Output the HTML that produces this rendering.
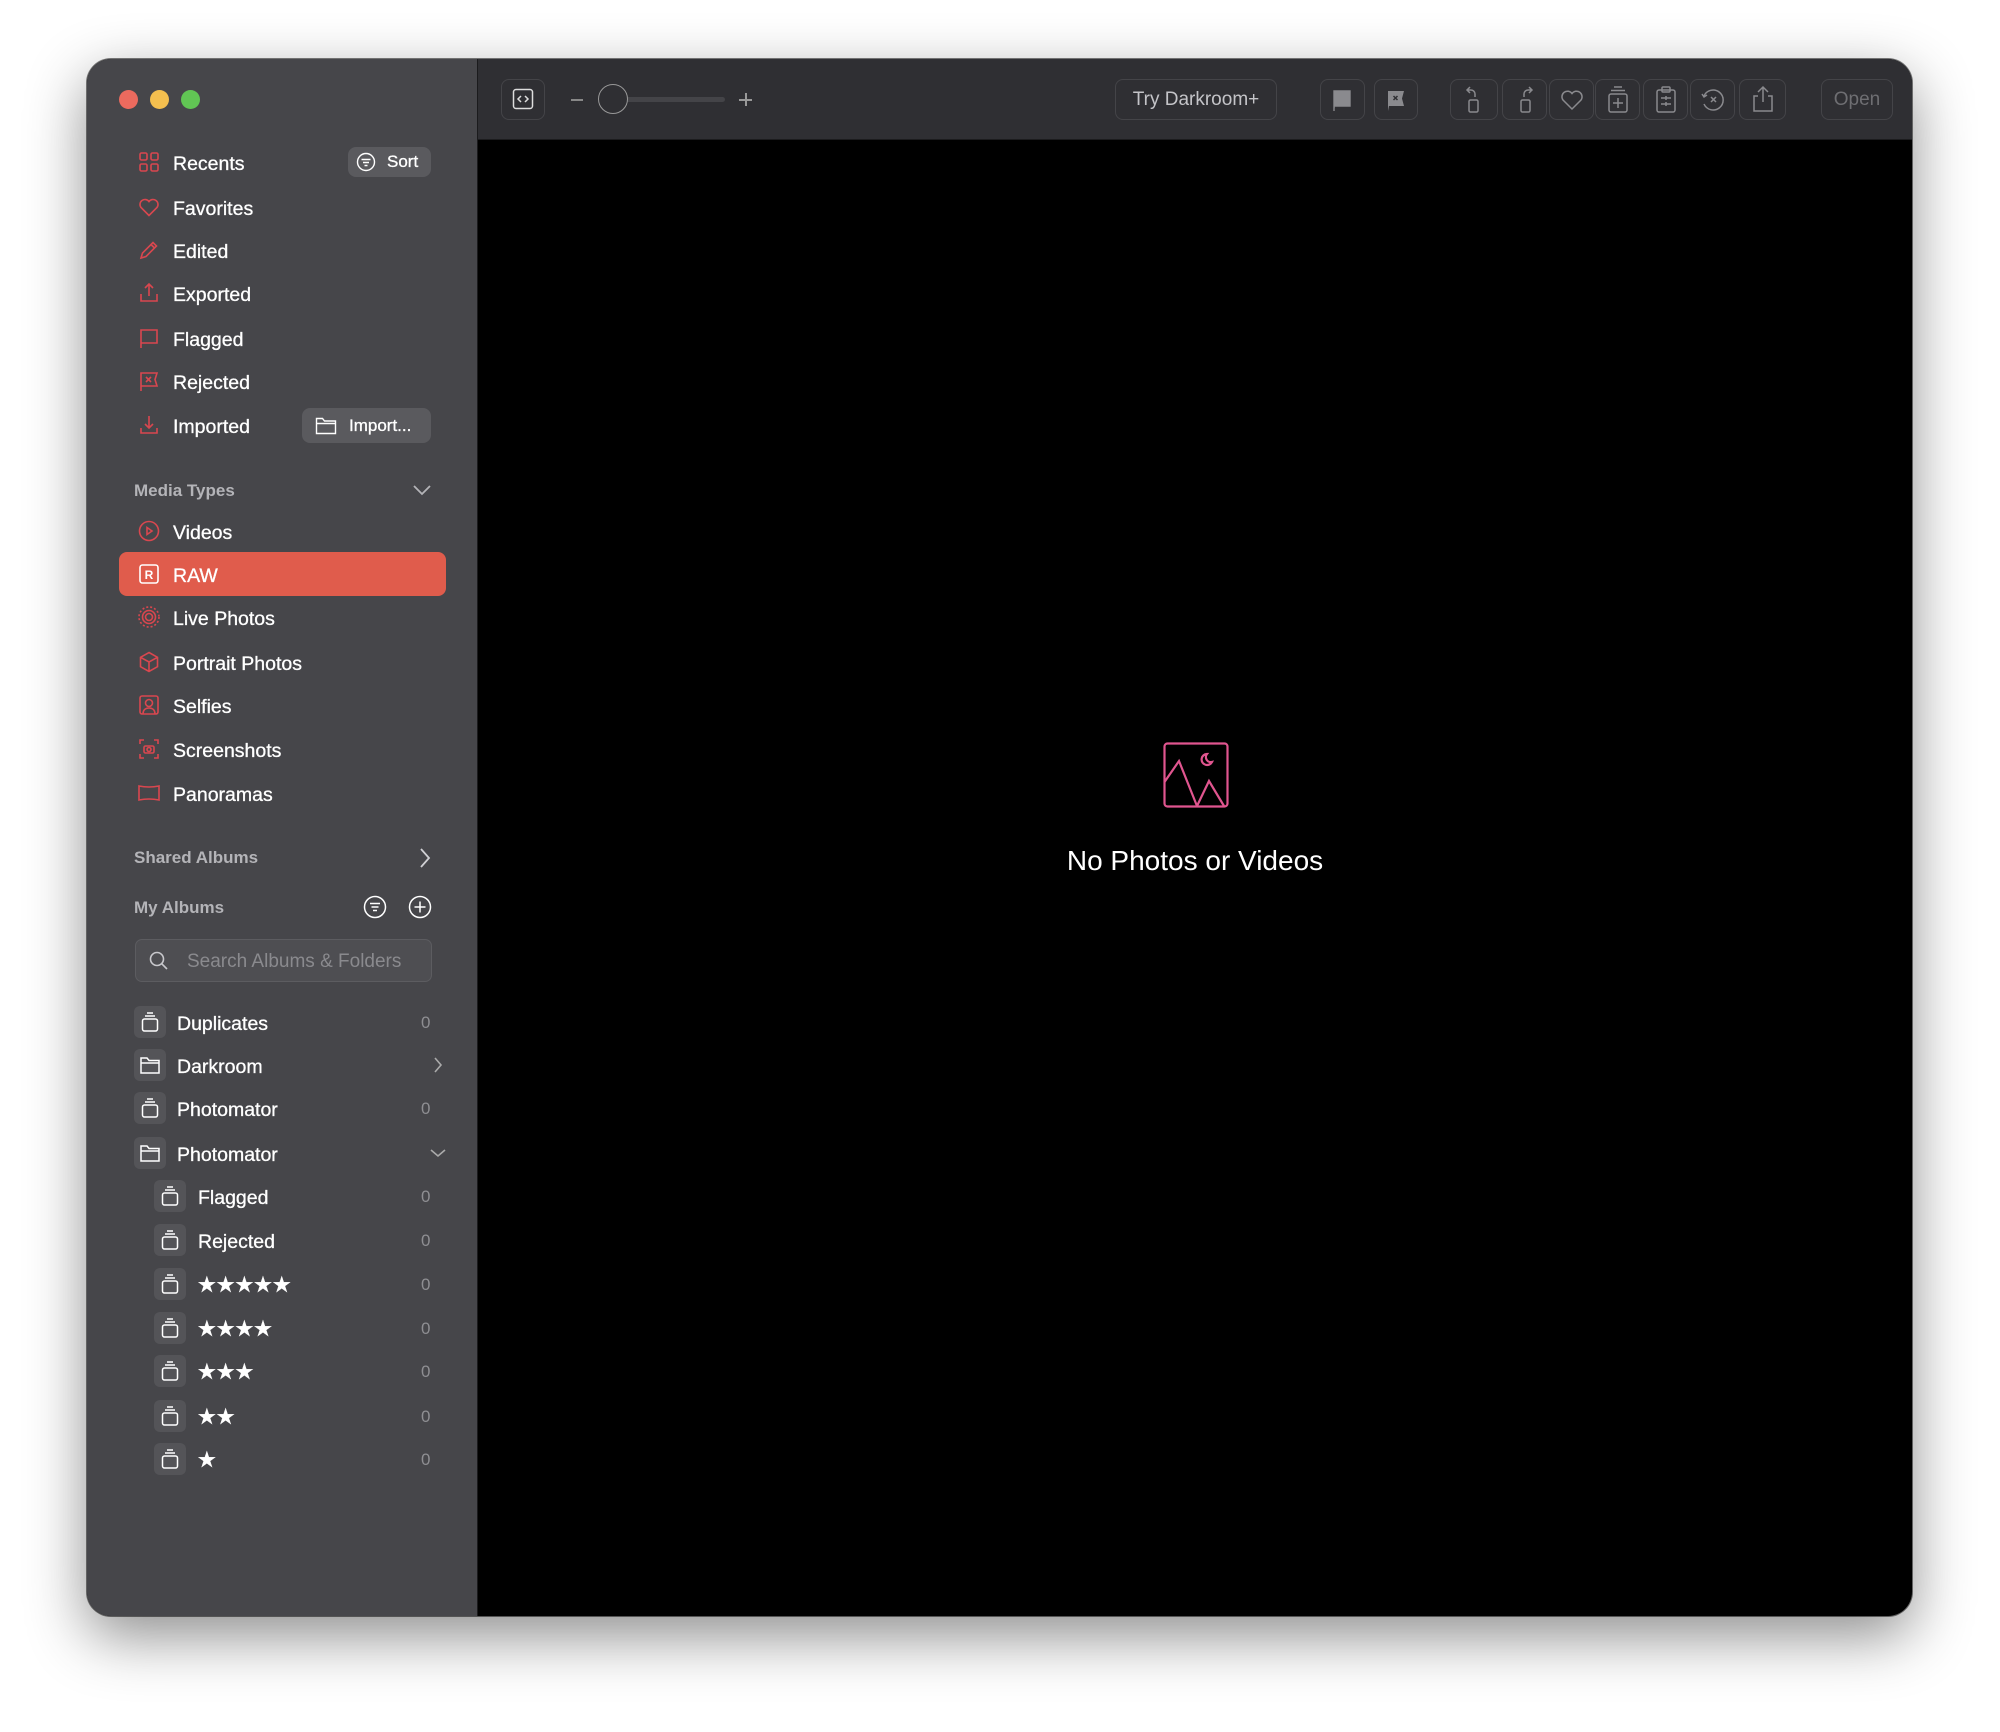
<!DOCTYPE html>
<html><head><meta charset="utf-8"><style>
*{margin:0;padding:0;box-sizing:border-box}
body{width:2000px;height:1732px;background:#fff;position:relative;overflow:hidden;font-family:"Liberation Sans",sans-serif}
.win{position:absolute;left:87px;top:59px;width:1825px;height:1557px;border-radius:24px;overflow:hidden;background:#000;box-shadow:0 20px 60px rgba(0,0,0,.45),0 0 0 1px rgba(0,0,0,.5)}
.side{position:absolute;left:0;top:0;width:391px;height:100%;background:#46464a;border-right:1px solid #1b1b1d}
.tb{position:absolute;left:391px;top:0;right:0;height:81px;background:#2f2f33;border-bottom:1px solid #1c1c1e}
.a{position:absolute}
.t{position:absolute;color:#fff;font-size:19.5px;line-height:24px;white-space:nowrap;margin-top:2px;-webkit-text-stroke:0.3px #fff}
.h{position:absolute;color:#b4b4b8;font-size:17px;font-weight:bold;line-height:22px;margin-top:1px}
.ic{position:absolute;width:24px;height:24px}
.btn{position:absolute;background:#5a5a5e;border-radius:8px;color:#fff;font-size:17px;-webkit-text-stroke:0.3px #fff}
.box{position:absolute;width:32px;height:32px;background:#545458;border-radius:6px}
.n{position:absolute;color:#8e8e92;font-size:17px;line-height:22px;margin-top:1px}
.tbb{position:absolute;top:20px;height:41px;border:1px solid #444448;border-radius:8px}
</style></head><body>
<div class="win">
<div class="side">
 <div class="a" style="left:32px;top:31px;width:19px;height:19px;border-radius:50%;background:#ec6a5e"></div>
 <div class="a" style="left:63px;top:31px;width:19px;height:19px;border-radius:50%;background:#f4bf4f"></div>
 <div class="a" style="left:94px;top:31px;width:19px;height:19px;border-radius:50%;background:#61c554"></div>

 <svg class="ic" style="left:50px;top:91px" viewBox="0 0 24 24" fill="none" stroke="#d9474f" stroke-width="1.6"><rect x="3" y="3" width="7" height="7" rx="1.5"/><rect x="14" y="3" width="7" height="7" rx="1.5"/><rect x="3" y="14" width="7" height="7" rx="1.5"/><rect x="14" y="14" width="7" height="7" rx="1.5"/></svg>
 <div class="t" style="left:86px;top:91px">Recents</div>
 <div class="btn" style="left:261px;top:88px;width:83px;height:30px"><svg class="a" style="left:8px;top:5px" width="20" height="20" viewBox="0 0 20 20" fill="none" stroke="#fff" stroke-width="1.4"><circle cx="10" cy="10" r="8.5"/><path d="M5.5 7.5h9M7 10.5h6M8.5 13.5h3"/></svg><span class="a" style="left:39px;top:5px">Sort</span></div>

 <svg class="ic" style="left:50px;top:136px" viewBox="0 0 24 24" fill="none" stroke="#d9474f" stroke-width="1.6"><path d="M12 20.5 4 12.5A4.8 4.8 0 0 1 12 6.5a4.8 4.8 0 0 1 8 6z"/></svg>
 <div class="t" style="left:86px;top:136px">Favorites</div>
 <svg class="ic" style="left:50px;top:179px" viewBox="0 0 24 24" fill="none" stroke="#d9474f" stroke-width="1.6"><path d="M4 20l1.5-5L16 4.5l3.5 3.5L9 18.5z M14 6.5l3.5 3.5"/></svg>
 <div class="t" style="left:86px;top:179px">Edited</div>
 <svg class="ic" style="left:50px;top:222px" viewBox="0 0 24 24" fill="none" stroke="#d9474f" stroke-width="1.6"><path d="M12 15V3M8 7l4-4 4 4M4 13v7h16v-7"/></svg>
 <div class="t" style="left:86px;top:222px">Exported</div>
 <svg class="ic" style="left:50px;top:267px" viewBox="0 0 24 24" fill="none" stroke="#d9474f" stroke-width="1.6"><path d="M4 22V4h16v13H4"/></svg>
 <div class="t" style="left:86px;top:267px">Flagged</div>
 <svg class="ic" style="left:50px;top:310px" viewBox="0 0 24 24" fill="none" stroke="#d9474f" stroke-width="1.6"><path d="M4 22V4h16l-2 6.5 2 6.5H4M9 8l5 5M14 8l-5 5"/></svg>
 <div class="t" style="left:86px;top:310px">Rejected</div>
 <svg class="ic" style="left:50px;top:354px" viewBox="0 0 24 24" fill="none" stroke="#d9474f" stroke-width="1.6"><path d="M12 3v12M8 11l4 4 4-4M4 15v5h16v-5"/></svg>
 <div class="t" style="left:86px;top:354px">Imported</div>
 <div class="btn" style="left:215px;top:349px;width:129px;height:35px"><svg class="a" style="left:13px;top:8px" width="22" height="19" viewBox="0 0 22 19" fill="none" stroke="#fff" stroke-width="1.4"><path d="M1.5 2.5h6l2 2.5h11v12.5h-19z M1.5 7.5h19"/></svg><span class="a" style="left:47px;top:8px">Import...</span></div>

 <div class="h" style="left:47px;top:420px">Media Types</div>
 <svg class="a" style="left:325px;top:424px" width="20" height="14" viewBox="0 0 20 14" fill="none" stroke="#b4b4b8" stroke-width="1.8"><path d="M2 3l8 8 8-8"/></svg>

 <svg class="ic" style="left:50px;top:460px" viewBox="0 0 24 24" fill="none" stroke="#d9474f" stroke-width="1.6"><circle cx="12" cy="12" r="9.5"/><path d="M10 8.5v7l5-3.5z"/></svg>
 <div class="t" style="left:86px;top:460px">Videos</div>
 <div class="a" style="left:32px;top:493px;width:327px;height:44px;background:#e05c4c;border-radius:8px"></div>
 <svg class="ic" style="left:50px;top:503px" viewBox="0 0 24 24" fill="none" stroke="#fff" stroke-width="1.6"><rect x="3" y="3" width="18" height="18" rx="2.5"/><text x="12" y="17" text-anchor="middle" font-family="Liberation Sans" font-weight="bold" font-size="12" fill="#fff" stroke="none">R</text></svg>
 <div class="t" style="left:86px;top:503px">RAW</div>
 <svg class="ic" style="left:50px;top:546px" viewBox="0 0 24 24" fill="none" stroke="#d9474f" stroke-width="1.6"><circle cx="12" cy="12" r="10" stroke-dasharray="2 2"/><circle cx="12" cy="12" r="6.5"/><circle cx="12" cy="12" r="3.5"/></svg>
 <div class="t" style="left:86px;top:546px">Live Photos</div>
 <svg class="ic" style="left:50px;top:591px" viewBox="0 0 24 24" fill="none" stroke="#d9474f" stroke-width="1.6"><path d="M12 2.5l8.5 4.8v9.4L12 21.5l-8.5-4.8V7.3zM3.5 7.3 12 12l8.5-4.7M12 12v9.5"/></svg>
 <div class="t" style="left:86px;top:591px">Portrait Photos</div>
 <svg class="ic" style="left:50px;top:634px" viewBox="0 0 24 24" fill="none" stroke="#d9474f" stroke-width="1.6"><rect x="3" y="3" width="18" height="18" rx="2"/><circle cx="12" cy="10" r="3.5"/><path d="M6 21c0-4 2.5-6 6-6s6 2 6 6"/></svg>
 <div class="t" style="left:86px;top:634px">Selfies</div>
 <svg class="ic" style="left:50px;top:678px" viewBox="0 0 24 24" fill="none" stroke="#d9474f" stroke-width="1.6"><path d="M3 7V3h4M17 3h4v4M21 17v4h-4M7 21H3v-4"/><rect x="7" y="9" width="10" height="7" rx="1.5"/><circle cx="12" cy="12.5" r="2"/></svg>
 <div class="t" style="left:86px;top:678px">Screenshots</div>
 <svg class="ic" style="left:50px;top:722px" viewBox="0 0 24 24" fill="none" stroke="#d9474f" stroke-width="1.6"><path d="M2 5q10 2 20 0v14q-10-2-20 0z"/></svg>
 <div class="t" style="left:86px;top:722px">Panoramas</div>

 <div class="h" style="left:47px;top:787px">Shared Albums</div>
 <svg class="a" style="left:331px;top:788px" width="14" height="22" viewBox="0 0 14 22" fill="none" stroke="#d0d0d4" stroke-width="1.8"><path d="M3 2l8 9-8 9"/></svg>
 <div class="h" style="left:47px;top:837px">My Albums</div>
 <svg class="a" style="left:276px;top:836px" width="24" height="24" viewBox="0 0 24 24" fill="none" stroke="#fff" stroke-width="1.5"><circle cx="12" cy="12" r="10.5"/><path d="M7 8.5h10M8.5 12h7M10 15.5h4"/></svg>
 <svg class="a" style="left:321px;top:836px" width="24" height="24" viewBox="0 0 24 24" fill="none" stroke="#fff" stroke-width="1.5"><circle cx="12" cy="12" r="10.5"/><path d="M12 6.5v11M6.5 12h11"/></svg>
 <div class="a" style="left:48px;top:880px;width:297px;height:43px;background:#4e4e52;border:1px solid #5c5c60;border-radius:7px"></div>
 <svg class="a" style="left:60px;top:890px" width="24" height="24" viewBox="0 0 24 24" fill="none" stroke="#c8c8cc" stroke-width="1.6"><circle cx="10" cy="10" r="6.5"/><path d="M14.8 14.8 20 20"/></svg>
 <div class="t" style="left:100px;top:889px;color:#8a8a8e;font-size:19px;-webkit-text-stroke:0">Search Albums &amp; Folders</div>

 <div class="box" style="left:47px;top:947px"></div><svg class="a" style="left:53px;top:951px" width="20" height="24" viewBox="0 0 20 24" fill="none" stroke="#fff" stroke-width="1.5"><path d="M7 3h6M5 6h10"/><rect x="2.5" y="9" width="15" height="12" rx="2"/></svg>
 <div class="t" style="left:90px;top:951px">Duplicates</div><div class="n" style="left:334px;top:952px">0</div>
 <div class="box" style="left:47px;top:990px"></div><svg class="a" style="left:52px;top:996px" width="22" height="20" viewBox="0 0 22 20" fill="none" stroke="#fff" stroke-width="1.5"><path d="M2 3h6l2 2.5h10V18H2z M2 8h18"/></svg>
 <div class="t" style="left:90px;top:994px">Darkroom</div>
 <svg class="a" style="left:345px;top:997px" width="12" height="18" viewBox="0 0 12 18" fill="none" stroke="#aaa" stroke-width="1.6"><path d="M3 2l6 7-6 7"/></svg>
 <div class="box" style="left:47px;top:1033px"></div><svg class="a" style="left:53px;top:1037px" width="20" height="24" viewBox="0 0 20 24" fill="none" stroke="#fff" stroke-width="1.5"><path d="M7 3h6M5 6h10"/><rect x="2.5" y="9" width="15" height="12" rx="2"/></svg>
 <div class="t" style="left:90px;top:1037px">Photomator</div><div class="n" style="left:334px;top:1038px">0</div>
 <div class="box" style="left:47px;top:1078px"></div><svg class="a" style="left:52px;top:1084px" width="22" height="20" viewBox="0 0 22 20" fill="none" stroke="#fff" stroke-width="1.5"><path d="M2 3h6l2 2.5h10V18H2z M2 8h18"/></svg>
 <div class="t" style="left:90px;top:1082px">Photomator</div>
 <svg class="a" style="left:342px;top:1088px" width="18" height="12" viewBox="0 0 18 12" fill="none" stroke="#aaa" stroke-width="1.6"><path d="M2 3l7 6 7-6"/></svg>

 <div class="box" style="left:67px;top:1121px"></div><svg class="a" style="left:73px;top:1125px" width="20" height="24" viewBox="0 0 20 24" fill="none" stroke="#fff" stroke-width="1.5"><path d="M7 3h6M5 6h10"/><rect x="2.5" y="9" width="15" height="12" rx="2"/></svg>
 <div class="t" style="left:111px;top:1125px">Flagged</div><div class="n" style="left:334px;top:1126px">0</div>
 <div class="box" style="left:67px;top:1165px"></div><svg class="a" style="left:73px;top:1169px" width="20" height="24" viewBox="0 0 20 24" fill="none" stroke="#fff" stroke-width="1.5"><path d="M7 3h6M5 6h10"/><rect x="2.5" y="9" width="15" height="12" rx="2"/></svg>
 <div class="t" style="left:111px;top:1169px">Rejected</div><div class="n" style="left:334px;top:1170px">0</div>
 <div class="box" style="left:67px;top:1209px"></div><svg class="a" style="left:73px;top:1213px" width="20" height="24" viewBox="0 0 20 24" fill="none" stroke="#fff" stroke-width="1.5"><path d="M7 3h6M5 6h10"/><rect x="2.5" y="9" width="15" height="12" rx="2"/></svg>
 <div class="t" style="left:110px;top:1212px;font-size:22px;letter-spacing:-1px">★★★★★</div><div class="n" style="left:334px;top:1214px">0</div>
 <div class="box" style="left:67px;top:1253px"></div><svg class="a" style="left:73px;top:1257px" width="20" height="24" viewBox="0 0 20 24" fill="none" stroke="#fff" stroke-width="1.5"><path d="M7 3h6M5 6h10"/><rect x="2.5" y="9" width="15" height="12" rx="2"/></svg>
 <div class="t" style="left:110px;top:1256px;font-size:22px;letter-spacing:-1px">★★★★</div><div class="n" style="left:334px;top:1258px">0</div>
 <div class="box" style="left:67px;top:1296px"></div><svg class="a" style="left:73px;top:1300px" width="20" height="24" viewBox="0 0 20 24" fill="none" stroke="#fff" stroke-width="1.5"><path d="M7 3h6M5 6h10"/><rect x="2.5" y="9" width="15" height="12" rx="2"/></svg>
 <div class="t" style="left:110px;top:1299px;font-size:22px;letter-spacing:-1px">★★★</div><div class="n" style="left:334px;top:1301px">0</div>
 <div class="box" style="left:67px;top:1341px"></div><svg class="a" style="left:73px;top:1345px" width="20" height="24" viewBox="0 0 20 24" fill="none" stroke="#fff" stroke-width="1.5"><path d="M7 3h6M5 6h10"/><rect x="2.5" y="9" width="15" height="12" rx="2"/></svg>
 <div class="t" style="left:110px;top:1344px;font-size:22px;letter-spacing:-1px">★★</div><div class="n" style="left:334px;top:1346px">0</div>
 <div class="box" style="left:67px;top:1384px"></div><svg class="a" style="left:73px;top:1388px" width="20" height="24" viewBox="0 0 20 24" fill="none" stroke="#fff" stroke-width="1.5"><path d="M7 3h6M5 6h10"/><rect x="2.5" y="9" width="15" height="12" rx="2"/></svg>
 <div class="t" style="left:110px;top:1387px;font-size:22px">★</div><div class="n" style="left:334px;top:1389px">0</div>
</div>

<div class="tb">
 <div class="tbb" style="left:23px;width:44px"></div>
 <svg class="a" style="left:34px;top:29px" width="22" height="22" viewBox="0 0 22 22" fill="none" stroke="#ddd" stroke-width="1.5"><rect x="1.5" y="1.5" width="19" height="19" rx="2.5"/><path d="M9 8l-3 3 3 3M13 8l3 3-3 3"/></svg>
 <div class="a" style="left:93px;top:40px;width:12px;height:1.5px;background:#888"></div>
 <div class="a" style="left:135px;top:38px;width:112px;height:5px;background:#444448;border-radius:3px"></div>
 <div class="a" style="left:120px;top:25px;width:30px;height:30px;border-radius:50%;border:1.5px solid #999;background:#2f2f33"></div>
 <div class="a" style="left:261px;top:40px;width:13px;height:1.5px;background:#999"></div>
 <div class="a" style="left:267px;top:34px;width:1.5px;height:13px;background:#999"></div>
 <div class="tbb" style="left:637px;width:162px"></div>
 <div class="a" style="left:637px;top:30px;width:162px;text-align:center;color:#c4c4c8;font-size:19px">Try Darkroom+</div>
 <div class="tbb" style="left:842px;width:45px"></div>
 <svg class="a" style="left:852px;top:29px" width="24" height="24" viewBox="0 0 24 24"><path d="M4 23V3h16v15H5" fill="#8a8a8e" stroke="#8a8a8e" stroke-width="1.4"/></svg>
 <div class="tbb" style="left:896px;width:44px"></div>
 <svg class="a" style="left:906px;top:29px" width="24" height="24" viewBox="0 0 24 24"><path d="M4 23V3h16l-2 7.5 2 7.5H5" fill="#8a8a8e"/><path d="M9.5 8l4 4M13.5 8l-4 4" stroke="#2f2f33" stroke-width="1.5"/></svg>
 <div class="tbb" style="left:972px;width:48px"></div><div class="tbb" style="left:1024px;width:45px"></div><div class="tbb" style="left:1071px;width:45px"></div><div class="tbb" style="left:1117px;width:45px"></div><div class="tbb" style="left:1165px;width:45px"></div><div class="tbb" style="left:1212px;width:45px"></div><div class="tbb" style="left:1261px;width:47px"></div>
 <svg class="a" style="left:983px;top:27px" width="26" height="28" viewBox="0 0 26 28" fill="none" stroke="#8a8a8e" stroke-width="1.5"><rect x="8" y="14" width="9" height="12" rx="1.5"/><path d="M14 11V8a4 4 0 0 0-4-4H6M9 1 6 4l3 3"/></svg>
 <svg class="a" style="left:1034px;top:27px" width="26" height="28" viewBox="0 0 26 28" fill="none" stroke="#8a8a8e" stroke-width="1.5"><rect x="9" y="14" width="9" height="12" rx="1.5"/><path d="M12 11V8a4 4 0 0 1 4-4h4M17 1l3 3-3 3"/></svg>
 <svg class="a" style="left:1081px;top:28px" width="26" height="26" viewBox="0 0 26 26" fill="none" stroke="#8a8a8e" stroke-width="1.5"><path d="M13 22 4 13A5.2 5.2 0 0 1 13 6.5a5.2 5.2 0 0 1 9 6.5z"/></svg>
 <svg class="a" style="left:1127px;top:26px" width="26" height="30" viewBox="0 0 26 30" fill="none" stroke="#8a8a8e" stroke-width="1.5"><path d="M9 2h8M6 5.5h14"/><rect x="4" y="9" width="18" height="18" rx="2"/><path d="M13 13v10M8 18h10"/></svg>
 <svg class="a" style="left:1175px;top:26px" width="26" height="30" viewBox="0 0 26 30" fill="none" stroke="#8a8a8e" stroke-width="1.5"><rect x="4" y="5" width="18" height="22" rx="2"/><rect x="9" y="2" width="8" height="5" rx="1"/><path d="M8 13h10M8 19h10M13 11v4M13 17v4"/></svg>
 <svg class="a" style="left:1222px;top:27px" width="26" height="28" viewBox="0 0 26 28" fill="none" stroke="#8a8a8e" stroke-width="1.5"><path d="M4 10a10 10 0 1 1 0 8M2 8l2 3 3-2M11 11l5 5M16 11l-5 5"/></svg>
 <svg class="a" style="left:1272px;top:25px" width="26" height="30" viewBox="0 0 26 30" fill="none" stroke="#8a8a8e" stroke-width="1.5"><path d="M13 18V3M8 8l5-5 5 5M8 12H4v15h18V12h-4"/></svg>
 <div class="tbb" style="left:1343px;width:72px"></div>
 <div class="a" style="left:1343px;top:30px;width:72px;text-align:center;color:#6e6e72;font-size:19px">Open</div>
</div>

<svg class="a" style="left:1076px;top:683px" width="66" height="66" viewBox="0 0 66 66" fill="none" stroke="#e0558f" stroke-width="2.2"><rect x="1.5" y="1.5" width="63" height="63" rx="3"/><path d="M1.5 40 16 19l18 45M34 64 46 39l15 25"/><path d="M44 12a5.5 5.5 0 1 0 5 8 5 5 0 0 1-5-8z"/></svg>
<div class="a" style="left:958px;top:786px;width:300px;text-align:center;color:#fff;font-size:28px">No Photos or Videos</div>
</div>
</body></html>
